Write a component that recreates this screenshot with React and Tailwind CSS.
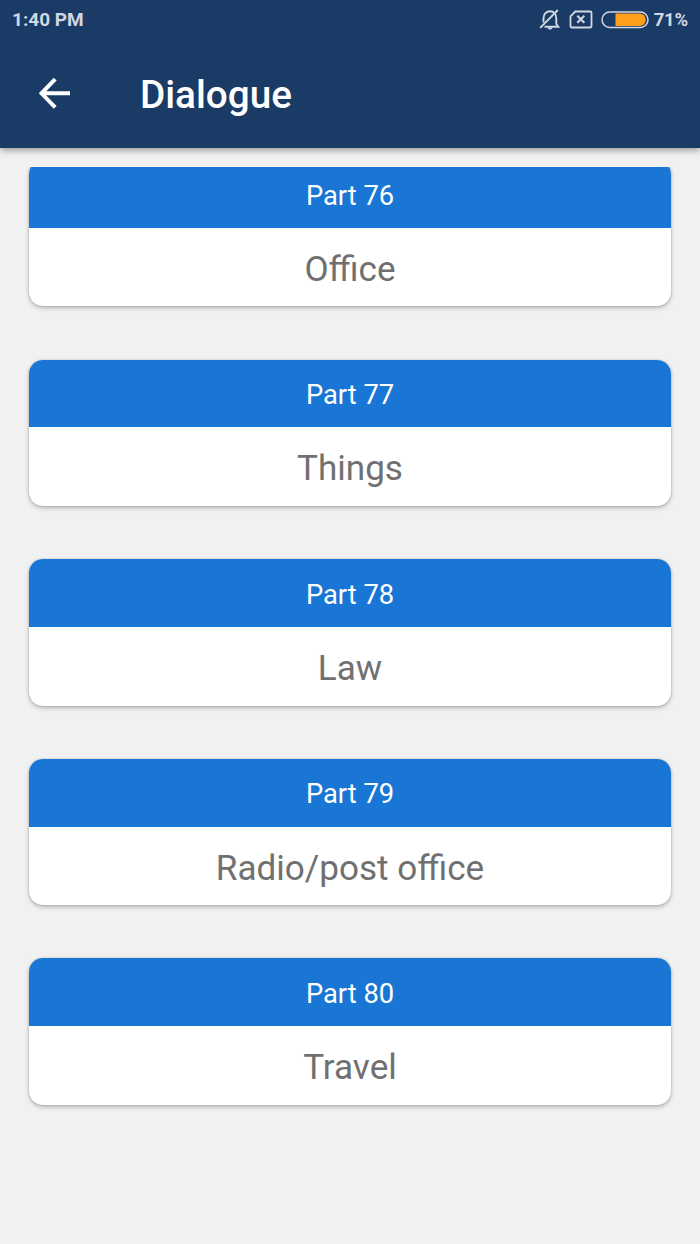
const lessons = [
  { part: 'Part 76', title: 'Office' },
  { part: 'Part 77', title: 'Things' },
  { part: 'Part 78', title: 'Law' },
  { part: 'Part 79', title: 'Radio/post office' },
  { part: 'Part 80', title: 'Travel' },
];

function BellOff() {
  return (
    <svg className="h-[22px] w-[22px]" viewBox="0 0 22 22" fill="none" stroke="currentColor" strokeWidth="1.9">
      <path d="M4.500 13.500V9.500C4.500 5.300 7 2.300 11 2.300S17.300 5.300 17.300 9.500V15L19.300 17.800H5.500" />
      <path d="M1.200 18.800L18.800 1" />
      <path d="M8.300 18.500h5.400c-.6 1.400-1.500 2-2.700 2s-2.100-.6-2.700-2Z" fill="currentColor" stroke="none" />
    </svg>
  );
}

function NoSim() {
  return (
    <svg className="h-[20px] w-[24px]" viewBox="0 0 24 20" fill="none" stroke="currentColor">
      <path d="M6.300 1.500H21.300Q22.500 1.500 22.500 2.700V16.300Q22.500 17.500 21.300 17.500H2.700Q1.500 17.500 1.500 16.300V6.300Z" strokeWidth="1.800" />
      <path d="M8.300 5.800L15.300 12.800M15.300 5.800L8.300 12.800" strokeWidth="2.100" />
    </svg>
  );
}

function Battery() {
  return (
    <svg className="h-[18px] w-[48px]" viewBox="0 0 48 18">
      <rect x="1" y="1" width="46" height="15.500" rx="7.750" fill="none" stroke="currentColor" strokeWidth="1.500" />
      <path d="M14.500 2.500H38.500a6.250 6.250 0 0 1 0 12.500H14.500Z" fill="#ff9f1c" />
    </svg>
  );
}

function LessonCard({ part, title }) {
  return (
    <article className="h-[146.300px] shrink-0 rounded-[14px] bg-white text-center shadow-[0_2px_4px_rgba(0,0,0,0.25),0_0_2px_rgba(0,0,0,0.18)]">
      <h2 className="h-[67.700px] rounded-t-[14px] bg-[#1976d5] pt-[0.600px] text-[27.300px] leading-[70px] text-white">{part}</h2>
      <p className="text-[35.100px] leading-[83px] text-[#707070]">{title}</p>
    </article>
  );
}

export default function App() {
  return (
    <div className="flex h-[1244px] w-[700px] flex-col overflow-hidden bg-[#f1f1f1] font-['Roboto',sans-serif]">
      <header className="z-10 h-[147.500px] shrink-0 bg-[#1b3b67] shadow-[0_2px_7px_rgba(0,0,0,0.4)]">
        <div className="flex h-10 items-center justify-between pl-3 pr-3 text-[19px] font-bold text-[#d1d8e1]">
          <span>1:40 PM</span>
          <div className="flex items-center">
            <BellOff />
            <span className="ml-2 flex"><NoSim /></span>
            <span className="ml-2 flex"><Battery /></span>
            <span className="ml-[5px] pt-0.5 text-[18.500px] tracking-[-0.200px]">71%</span>
          </div>
        </div>
        <div className="flex h-[106px] items-center text-white">
          <svg className="ml-[39px] h-8 w-8" viewBox="0 0 32 32" fill="none" stroke="currentColor" strokeWidth="4">
            <path d="M16.200 2.200L2.500 16.300L16.200 30.400M2.500 16.300H31" />
          </svg>
          <h1 className="ml-[69px] pt-[3px] text-[38.700px] font-medium leading-[46px]">Dialogue</h1>
        </div>
      </header>
      <main className="mt-[19.500px] min-h-0 flex-1 overflow-hidden px-[29px]">
        <div className="-mt-[6.900px] flex flex-col gap-[53.300px]">
          {lessons.map((lesson) => (
            <LessonCard key={lesson.part} {...lesson} />
          ))}
        </div>
      </main>
    </div>
  );
}
